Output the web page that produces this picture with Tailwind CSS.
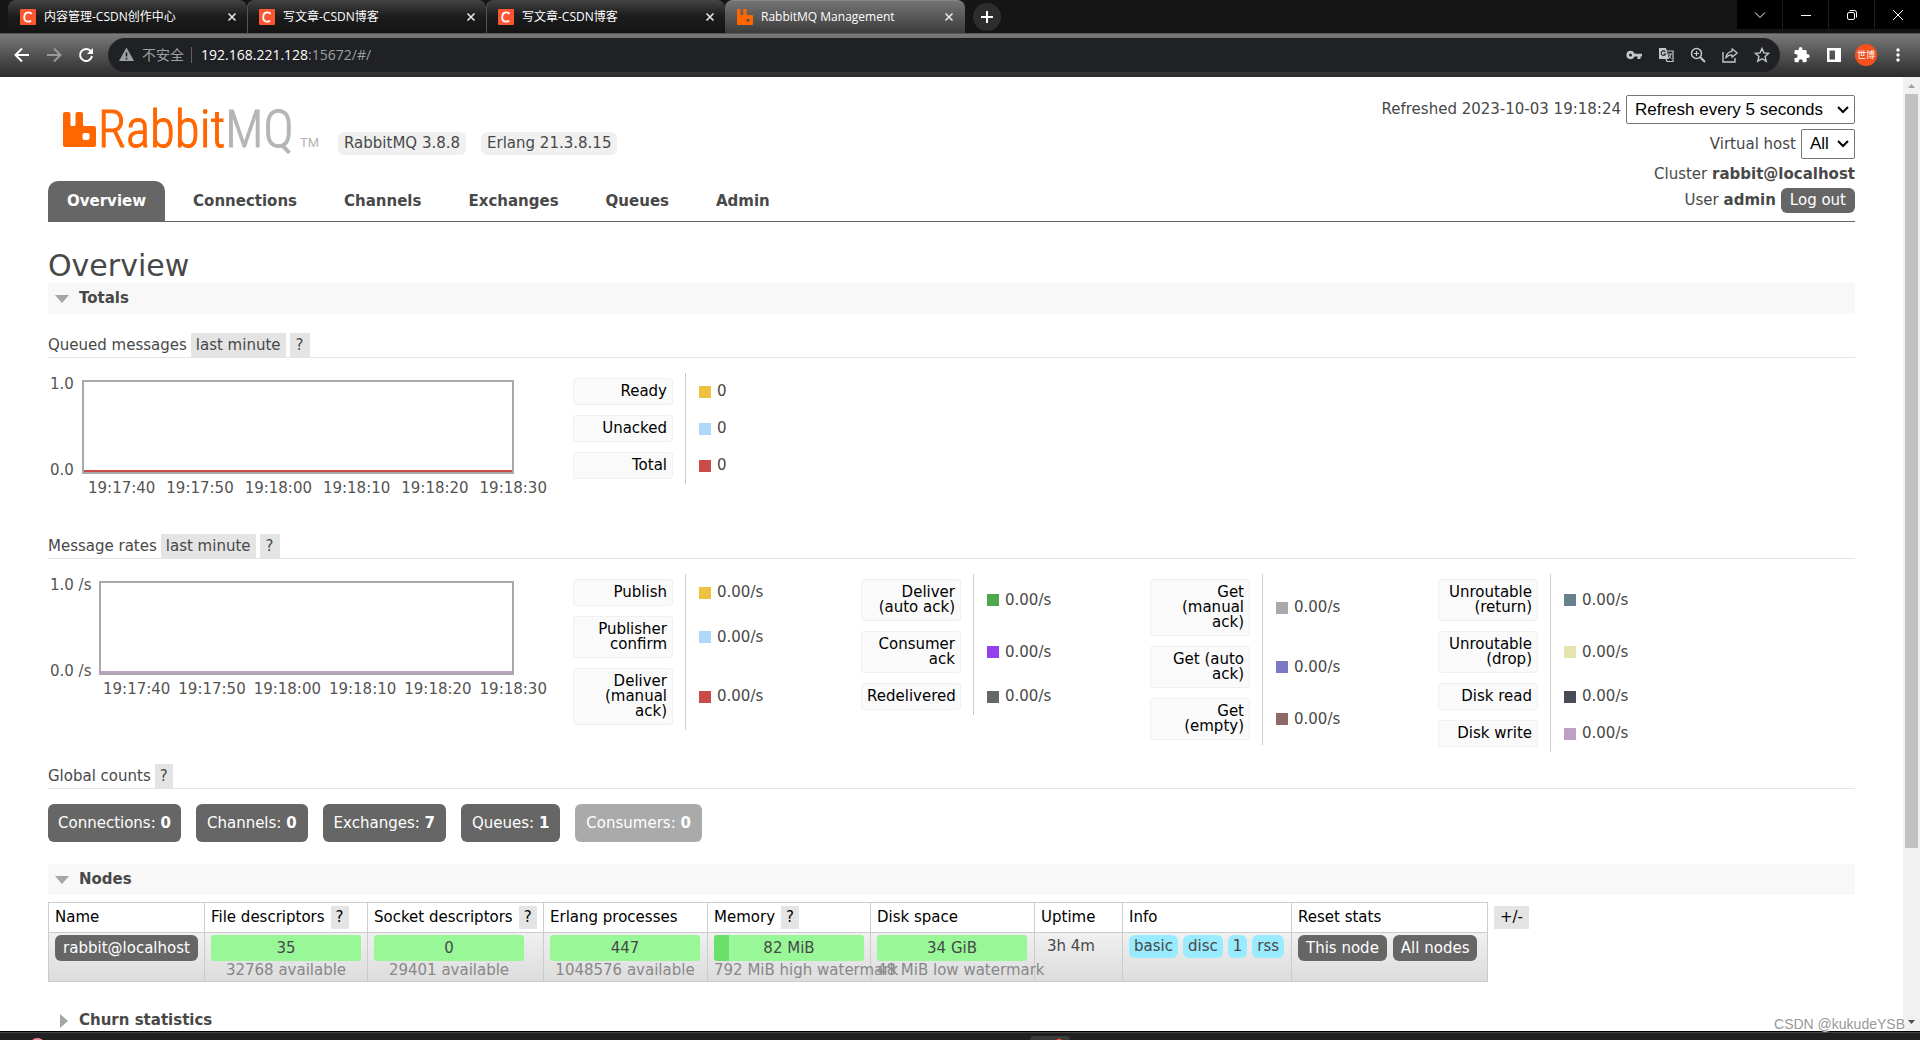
<!DOCTYPE html>
<html lang="en">
<head>
<meta charset="utf-8">
<meta name="viewport" content="width=device-width, initial-scale=1">
<title>RabbitMQ Management</title>
<script src="https://cdn.jsdelivr.net/npm/@tailwindcss/browser@4"></script>
</head>
<body class="flex h-screen flex-col overflow-hidden bg-white font-['DejaVu_Sans',sans-serif] text-[15px] text-[#484848]">

<!-- Browser tab strip -->
<div class="flex h-[33px] shrink-0 items-start bg-[#151515] pl-2 font-['Open_Sans','Noto_Sans_CJK_SC',sans-serif] text-xs text-white">
  <div class="flex h-full w-[239px] items-center rounded-t-lg bg-linear-to-b from-[#444] via-[#1c1c1c] to-[#141414] pl-3 pr-2">
    <svg class="size-4" viewBox="0 0 16 16"><rect width="16" height="16" rx="1" fill="#fc5531"/><path d="M11.500 5.200C10.800 3.800 9.300 3.300 7.800 3.500 5.500 3.800 4.300 5.800 4.200 8c-.1 2.500 1.200 4.500 3.600 4.600 1.200.1 2.500-.2 3.300-1" fill="none" stroke="#fff" stroke-width="1.800"/></svg>
    <span class="ml-2 flex-1">内容管理-CSDN创作中心</span>
    <button aria-label="Close tab"><svg class="size-[14px]" viewBox="0 0 14 14"><path d="M3.500 3.500l7 7M10.500 3.500l-7 7" stroke="#e8e8e8" stroke-width="1.600"/></svg></button>
  </div>
  <div class="flex h-full w-[239px] items-center rounded-t-lg border-l border-[#555] bg-linear-to-b from-[#444] via-[#1c1c1c] to-[#141414] pl-[11px] pr-2">
    <svg class="size-4" viewBox="0 0 16 16"><rect width="16" height="16" rx="1" fill="#fc5531"/><path d="M11.500 5.200C10.800 3.800 9.300 3.300 7.800 3.500 5.500 3.800 4.300 5.800 4.200 8c-.1 2.500 1.200 4.500 3.600 4.600 1.200.1 2.500-.2 3.300-1" fill="none" stroke="#fff" stroke-width="1.800"/></svg>
    <span class="ml-2 flex-1">写文章-CSDN博客</span>
    <button aria-label="Close tab"><svg class="size-[14px]" viewBox="0 0 14 14"><path d="M3.500 3.500l7 7M10.500 3.500l-7 7" stroke="#e8e8e8" stroke-width="1.600"/></svg></button>
  </div>
  <div class="flex h-full w-[239px] items-center rounded-t-lg border-l border-[#555] bg-linear-to-b from-[#444] via-[#1c1c1c] to-[#141414] pl-[11px] pr-2">
    <svg class="size-4" viewBox="0 0 16 16"><rect width="16" height="16" rx="1" fill="#fc5531"/><path d="M11.500 5.200C10.800 3.800 9.300 3.300 7.800 3.500 5.500 3.800 4.300 5.800 4.200 8c-.1 2.500 1.200 4.500 3.600 4.600 1.200.1 2.500-.2 3.300-1" fill="none" stroke="#fff" stroke-width="1.800"/></svg>
    <span class="ml-2 flex-1">写文章-CSDN博客</span>
    <button aria-label="Close tab"><svg class="size-[14px]" viewBox="0 0 14 14"><path d="M3.500 3.500l7 7M10.500 3.500l-7 7" stroke="#e8e8e8" stroke-width="1.600"/></svg></button>
  </div>
  <div class="flex h-full w-[240px] items-center rounded-t-lg border-t border-[#888] bg-linear-to-b from-[#747474] to-[#3c3c3c] pl-3 pr-[9px]">
    <svg class="size-4" viewBox="0 0 16 16"><path fill="#f60" fill-rule="evenodd" d="M0 .8Q0 0 .8 0h1.900q.8 0 .8.800V6h2.700V.800Q6.200 0 7 0h1.900q.8 0 .8.800V6h5.500q.8 0 .8.800v8.400q0 .8-.8.800H.8Q0 16 0 15.200zM9.600 10v2.600h3V10z"/></svg>
    <span class="ml-2 flex-1">RabbitMQ Management</span>
    <button aria-label="Close tab"><svg class="size-[14px]" viewBox="0 0 14 14"><path d="M3.500 3.500l7 7M10.500 3.500l-7 7" stroke="#e8e8e8" stroke-width="1.600"/></svg></button>
  </div>
  <button class="ml-2 mt-[3px] flex size-7 items-center justify-center rounded-full bg-[#2d2d2d]" aria-label="New tab"><svg class="size-3" viewBox="0 0 12 12"><path d="M6 0v12M0 6h12" stroke="#fff" stroke-width="2"/></svg></button>
  <div class="flex-1"></div>
  <div class="flex h-[29px] gap-px bg-[#1d1d1d]">
    <button class="flex w-[45px] items-center justify-center bg-black" aria-label="Search tabs"><svg class="size-3" viewBox="0 0 12 12"><path d="M1 3.500l5 5 5-5" fill="none" stroke="#fff"/></svg></button>
    <button class="flex w-[45px] items-center justify-center bg-black" aria-label="Minimize"><svg class="size-3" viewBox="0 0 12 12"><path d="M1 6.500h10" stroke="#fff"/></svg></button>
    <button class="flex w-[45px] items-center justify-center bg-black" aria-label="Restore"><svg class="size-3" viewBox="0 0 12 12"><rect x="1.500" y="3.500" width="7" height="7" rx="1.500" fill="none" stroke="#fff"/><path d="M3.500 1.500h5a2 2 0 0 1 2 2v5" fill="none" stroke="#fff"/></svg></button>
    <button class="flex w-[45px] items-center justify-center bg-black" aria-label="Close"><svg class="size-3" viewBox="0 0 12 12"><path d="M1 1l10 10M11 1L1 11" stroke="#fff"/></svg></button>
  </div>
</div>

<!-- Browser toolbar -->
<div class="flex h-11 shrink-0 items-center border-t border-[#555] bg-linear-to-b from-[#7a7a7a] to-[#2c2c2c] px-[14px] pb-[2px] font-['Open_Sans','Noto_Sans_CJK_SC',sans-serif]">
  <div class="flex gap-4">
    <button aria-label="Back"><svg class="size-4" viewBox="0 0 16 16"><path d="M15 8H2M8 1.500L1.500 8 8 14.500" fill="none" stroke="#fff" stroke-width="2"/></svg></button>
    <button aria-label="Forward"><svg class="size-4" viewBox="0 0 16 16"><path d="M1 8h13M8 1.500L14.500 8 8 14.500" fill="none" stroke="#9a9a9a" stroke-width="2"/></svg></button>
    <button aria-label="Reload"><svg class="size-4" viewBox="0 0 16 16"><path d="M13 4.500A6 6 0 1 0 14 9" fill="none" stroke="#fff" stroke-width="2"/><path d="M15 1v6H9z" fill="#fff"/></svg></button>
  </div>
  <div class="ml-[14px] flex h-[34px] flex-1 items-center rounded-full bg-[#202124] pl-[11px] pr-[10px] text-sm text-[#9aa0a6]">
    <svg class="size-[15px]" viewBox="0 0 15 15"><path d="M7.500.5L15 14H0z" fill="#9aa0a6"/><path d="M7.500 5.500v4M7.500 10.800v1.600" stroke="#202124" stroke-width="1.600"/></svg>
    <span class="ml-2">不安全</span>
    <span class="ml-[7px] h-4 w-px bg-[#5f6368]"></span>
    <div class="ml-[9px] flex-1"><a href="#/"><span class="text-white">192.168.221.128</span>:15672/#/</a></div>
    <div class="flex items-center gap-4">
      <svg class="size-4" viewBox="0 0 16 16"><path fill="#c4c7ca" fill-rule="evenodd" d="M4.500 3.800a4.200 4.200 0 0 1 4 2.900H16v2.900h-1.500V12h-3V9.600h-3a4.200 4.200 0 1 1-4-5.800zm0 2.800a1.500 1.500 0 1 0 0 3 1.500 1.500 0 0 0 0-3z"/></svg>
      <svg class="size-4" viewBox="0 0 16 16"><path d="M1 1h7l3 11H1.500Q1 12 1 11z" fill="#c4c7ca"/><path d="M8.500 4H15v10.500H9L8 12" fill="none" stroke="#c4c7ca" stroke-width="1.200"/><path d="M7.300 4.800A2.300 2.300 0 1 0 7.600 7H5.500" fill="none" stroke="#202124" stroke-width="1.100"/><path d="M10 7h4M12.800 7.200q-.6 2.700-2.600 4.500M11 8.500q.8 2 2.600 3.200" fill="none" stroke="#c4c7ca"/></svg>
      <svg class="size-4" viewBox="0 0 16 16"><circle cx="6.500" cy="6.500" r="5" fill="none" stroke="#c4c7ca" stroke-width="1.500"/><path d="M10.200 10.200L15 15" stroke="#c4c7ca" stroke-width="2"/><path d="M6.500 4v5M4 6.500h5" stroke="#c4c7ca" stroke-width="1.200"/></svg>
      <svg class="size-4" viewBox="0 0 16 16"><path d="M1 5v10h12v-4" fill="none" stroke="#c4c7ca" stroke-width="1.400"/><path d="M10 1.800L15.200 6 10 10.200V7.800Q6 7.800 3.800 11 4.500 5 10 4.300z" fill="none" stroke="#c4c7ca" stroke-width="1.300" stroke-linejoin="round"/></svg>
      <svg class="size-4" viewBox="0 0 16 16"><path d="M8 1.500l1.900 4.400 4.800.4-3.600 3.200 1.100 4.700L8 11.700l-4.200 2.500 1.100-4.700L1.300 6.300l4.800-.4z" fill="none" stroke="#c4c7ca" stroke-width="1.400"/></svg>
    </div>
  </div>
  <div class="ml-[14px] flex items-center gap-4">
    <svg class="size-4" viewBox="0 0 16 16"><path d="M13.800 7.300h-1.100V4.400q0-1.400-1.400-1.400H8.400V1.800a1.800 1.800 0 0 0-3.600 0V3H1.900Q.5 3 .5 4.400v2.700h1.100a2 2 0 0 1 0 4H.5v2.800q0 1.400 1.400 1.400h2.800v-1.100a2 2 0 0 1 4 0v1.100h2.600q1.400 0 1.400-1.400V11h1.100a1.850 1.850 0 0 0 0-3.700z" fill="#fff"/></svg>
    <svg class="size-4" viewBox="0 0 16 16"><path d="M1 1h14v14H1zM3.500 3.500v9H9v-9z" fill="#fff" fill-rule="evenodd"/></svg>
    <span class="-mx-[3px] flex size-[22px] items-center justify-center rounded-full bg-[#f4511e] text-[9px] leading-none text-white">世博</span>
    <svg class="size-4" viewBox="0 0 16 16"><circle cx="8" cy="3" r="1.700" fill="#fff"/><circle cx="8" cy="8" r="1.700" fill="#fff"/><circle cx="8" cy="13" r="1.700" fill="#fff"/></svg>
  </div>
</div>

<!-- Page viewport -->
<div class="flex min-h-0 flex-1">
<main class="h-full min-w-0 flex-1 overflow-hidden px-12">

  <header class="flex h-[145px] items-stretch justify-between border-b border-[#666]">
    <div class="flex flex-col justify-between">
      <div class="flex items-end pl-[15px] pt-[34px]">
        <svg class="h-[38px] w-[256px] overflow-visible" viewBox="0 0 256 38" role="img" aria-label="RabbitMQ">
          <path fill="#f60" fill-rule="evenodd" d="M0 3Q0 1 2 1h3.500q2 0 2 2v10.500q0 1.500 1.500 1.500h2q1.500 0 1.500-1.500V3q0-2 2-2H18q2 0 2 2v10.500q0 1.500 1.500 1.500H31q2 0 2 2v17q0 2-2 2H2q-2 0-2-2zM21.500 22q-2 0-2 2v3q0 2 2 2h3q2 0 2-2v-3q0-2-2-2z"/>
          <text x="35" y="36" font-size="51" stroke-width="1" class="font-['Roboto_Condensed'] font-light"><tspan fill="#f60" stroke="#f60">Rabbit</tspan><tspan fill="#b5b5b5" stroke="#b5b5b5">MQ</tspan></text>
          <text x="237" y="36" font-size="13" fill="#b5b5b5" class="font-['Roboto']">TM</text>
        </svg>
        <div class="-mb-[6px] ml-[19px] flex gap-[15px]">
          <span class="rounded-md bg-[#f0f0f0] px-[6px] leading-[23px]">RabbitMQ 3.8.8</span>
          <span class="rounded-md bg-[#f0f0f0] px-[6px] leading-[23px]">Erlang 21.3.8.15</span>
        </div>
      </div>
      <nav class="flex gap-[9px] font-bold leading-10">
        <a href="#/" class="rounded-t-[10px] bg-[#666] px-[19px] text-white">Overview</a>
        <a href="#/connections" class="px-[19px]">Connections</a>
        <a href="#/channels" class="px-[19px]">Channels</a>
        <a href="#/exchanges" class="px-[19px]">Exchanges</a>
        <a href="#/queues" class="px-[19px]">Queues</a>
        <a href="#/users" class="px-[19px]">Admin</a>
      </nav>
    </div>
    <div class="flex flex-col items-end pt-[18px]">
      <div class="flex items-center gap-[5px]">
        <label for="refresh">Refreshed 2023-10-03 19:18:24</label>
        <div class="relative">
          <select id="refresh" class="block h-[29px] w-[229px] appearance-none rounded-xs border border-[#767676] bg-white pl-2 font-['Liberation_Sans',sans-serif] text-[17px] text-black"><option>Refresh every 5 seconds</option><option>Refresh every 10 seconds</option></select>
          <svg class="pointer-events-none absolute right-[6px] top-[11px] h-2 w-3" viewBox="0 0 12 8"><path d="M1 1l5 5 5-5" fill="none" stroke="#000" stroke-width="2"/></svg>
        </div>
      </div>
      <div class="mt-[5px] flex items-center gap-[5px]">
        <label for="vhost">Virtual host</label>
        <div class="relative">
          <select id="vhost" class="block h-[30px] w-[54px] appearance-none rounded-xs border border-[#767676] bg-white pl-2 font-['Liberation_Sans',sans-serif] text-[17px] text-black"><option>All</option><option>/</option></select>
          <svg class="pointer-events-none absolute right-[6px] top-[11px] h-2 w-3" viewBox="0 0 12 8"><path d="M1 1l5 5 5-5" fill="none" stroke="#000" stroke-width="2"/></svg>
        </div>
      </div>
      <div class="mt-1 leading-[23px]">Cluster <b>rabbit@localhost</b></div>
      <div class="mt-[2px] flex items-center gap-[5px] leading-[25px]">
        <span>User <b>admin</b></span>
        <button class="rounded-md bg-[#666] px-[9px] text-white">Log out</button>
      </div>
    </div>
  </header>

  <h1 class="pt-[27px] text-[30px] leading-[34px]">Overview</h1>
  <h2 class="flex h-[31px] items-center bg-[#f8f8f8] pl-[7px] font-bold">
    <svg class="mr-[10px] h-2 w-[14px]" viewBox="0 0 14 8"><path d="M0 0h14L7 8z" fill="#a5a5a5"/></svg>Totals
  </h2>

  <h3 class="mt-[19px] flex gap-1 border-b border-[#e4e4e4] leading-6">Queued messages
    <button class="bg-[#e4e4e4] px-[5px]">last minute</button><button class="bg-[#e4e4e4] px-[6px]">?</button>
  </h3>
  <section class="mt-[15px] flex h-[142px]">
    <div class="w-[525px] shrink-0 pt-[7px] text-[#545454]">
      <div class="flex h-[94px]">
        <div class="-my-[6px] flex w-[34px] shrink-0 flex-col justify-between pl-[2px] leading-5"><span>1.0</span><span>0.0</span></div>
        <div class="flex w-[432px] items-end border-2 border-[#a9a9a9]"><div class="h-[2px] w-full bg-[#cb4b4b]"></div></div>
      </div>
      <div class="ml-10 mr-[26px] mt-1 flex justify-between leading-5"><span>19:17:40</span><span>19:17:50</span><span>19:18:00</span><span>19:18:10</span><span>19:18:20</span><span>19:18:30</span></div>
    </div>
    <table class="self-start leading-[15px]">
      <tr><th class="border-r border-[#ccc] py-[5px] pl-0 pr-3 font-normal"><div class="w-[100px] rounded-[3px] border border-[#f0f0f0] bg-[#fafafa] p-[5px] text-right text-black">Ready</div></th><td class="pl-[13px]"><div class="flex items-center gap-[6px]"><i class="size-3 bg-[#edc240]"></i>0</div></td></tr>
      <tr><th class="border-r border-[#ccc] py-[5px] pl-0 pr-3 font-normal"><div class="w-[100px] rounded-[3px] border border-[#f0f0f0] bg-[#fafafa] p-[5px] text-right text-black">Unacked</div></th><td class="pl-[13px]"><div class="flex items-center gap-[6px]"><i class="size-3 bg-[#afd8f8]"></i>0</div></td></tr>
      <tr><th class="border-r border-[#ccc] py-[5px] pl-0 pr-3 font-normal"><div class="w-[100px] rounded-[3px] border border-[#f0f0f0] bg-[#fafafa] p-[5px] text-right text-black">Total</div></th><td class="pl-[13px]"><div class="flex items-center gap-[6px]"><i class="size-3 bg-[#cb4b4b]"></i>0</div></td></tr>
    </table>
  </section>

  <h3 class="mt-[19px] flex gap-1 border-b border-[#e4e4e4] leading-6">Message rates
    <button class="bg-[#e4e4e4] px-[5px]">last minute</button><button class="bg-[#e4e4e4] px-[6px]">?</button>
  </h3>
  <section class="mt-[15px] flex">
    <div class="w-[525px] shrink-0 pt-[7px] text-[#545454]">
      <div class="flex h-[94px]">
        <div class="-my-[6px] flex w-[51px] shrink-0 flex-col justify-between pl-[2px] leading-5"><span>1.0 /s</span><span>0.0 /s</span></div>
        <div class="flex w-[415px] items-end border-2 border-[#a9a9a9]"><div class="h-[2px] w-full bg-[#bda0c3]"></div></div>
      </div>
      <div class="ml-[55px] mr-[26px] mt-1 flex justify-between leading-5"><span>19:17:40</span><span>19:17:50</span><span>19:18:00</span><span>19:18:10</span><span>19:18:20</span><span>19:18:30</span></div>
    </div>
    <div class="flex w-[288px] shrink-0 items-start">
      <table class="leading-[15px]">
        <tr><th class="border-r border-[#ccc] py-[5px] pl-0 pr-3 font-normal"><div class="w-[100px] rounded-[3px] border border-[#f0f0f0] bg-[#fafafa] p-[5px] text-right text-black">Publish</div></th><td class="pl-[13px]"><div class="flex items-center gap-[6px]"><i class="size-3 bg-[#edc240]"></i>0.00/s</div></td></tr>
        <tr><th class="border-r border-[#ccc] py-[5px] pl-0 pr-3 font-normal"><div class="w-[100px] rounded-[3px] border border-[#f0f0f0] bg-[#fafafa] p-[5px] text-right text-black">Publisher<br>confirm</div></th><td class="pl-[13px]"><div class="flex items-center gap-[6px]"><i class="size-3 bg-[#afd8f8]"></i>0.00/s</div></td></tr>
        <tr><th class="border-r border-[#ccc] py-[5px] pl-0 pr-3 font-normal"><div class="w-[100px] rounded-[3px] border border-[#f0f0f0] bg-[#fafafa] p-[5px] text-right text-black">Deliver<br>(manual<br>ack)</div></th><td class="pl-[13px]"><div class="flex items-center gap-[6px]"><i class="size-3 bg-[#cb4b4b]"></i>0.00/s</div></td></tr>
      </table>
    </div>
    <div class="flex w-[289px] shrink-0 items-start">
      <table class="leading-[15px]">
        <tr><th class="border-r border-[#ccc] py-[5px] pl-0 pr-3 font-normal"><div class="w-[100px] rounded-[3px] border border-[#f0f0f0] bg-[#fafafa] p-[5px] text-right text-black">Deliver<br>(auto ack)</div></th><td class="pl-[13px]"><div class="flex items-center gap-[6px]"><i class="size-3 bg-[#4da74d]"></i>0.00/s</div></td></tr>
        <tr><th class="border-r border-[#ccc] py-[5px] pl-0 pr-3 font-normal"><div class="w-[100px] rounded-[3px] border border-[#f0f0f0] bg-[#fafafa] p-[5px] text-right text-black">Consumer<br>ack</div></th><td class="pl-[13px]"><div class="flex items-center gap-[6px]"><i class="size-3 bg-[#9440ed]"></i>0.00/s</div></td></tr>
        <tr><th class="border-r border-[#ccc] py-[5px] pl-0 pr-3 font-normal"><div class="w-[100px] rounded-[3px] border border-[#f0f0f0] bg-[#fafafa] p-[5px] text-right text-black">Redelivered</div></th><td class="pl-[13px]"><div class="flex items-center gap-[6px]"><i class="size-3 bg-[#666]"></i>0.00/s</div></td></tr>
      </table>
    </div>
    <div class="flex w-[288px] shrink-0 items-start">
      <table class="leading-[15px]">
        <tr><th class="border-r border-[#ccc] py-[5px] pl-0 pr-3 font-normal"><div class="w-[100px] rounded-[3px] border border-[#f0f0f0] bg-[#fafafa] p-[5px] text-right text-black">Get<br>(manual<br>ack)</div></th><td class="pl-[13px]"><div class="flex items-center gap-[6px]"><i class="size-3 bg-[#aaa]"></i>0.00/s</div></td></tr>
        <tr><th class="border-r border-[#ccc] py-[5px] pl-0 pr-3 font-normal"><div class="w-[100px] rounded-[3px] border border-[#f0f0f0] bg-[#fafafa] p-[5px] text-right text-black">Get (auto<br>ack)</div></th><td class="pl-[13px]"><div class="flex items-center gap-[6px]"><i class="size-3 bg-[#7c79c3]"></i>0.00/s</div></td></tr>
        <tr><th class="border-r border-[#ccc] py-[5px] pl-0 pr-3 font-normal"><div class="w-[100px] rounded-[3px] border border-[#f0f0f0] bg-[#fafafa] p-[5px] text-right text-black">Get<br>(empty)</div></th><td class="pl-[13px]"><div class="flex items-center gap-[6px]"><i class="size-3 bg-[#8e6767]"></i>0.00/s</div></td></tr>
      </table>
    </div>
    <div class="flex items-start">
      <table class="leading-[15px]">
        <tr><th class="border-r border-[#ccc] py-[5px] pl-0 pr-3 font-normal"><div class="w-[100px] rounded-[3px] border border-[#f0f0f0] bg-[#fafafa] p-[5px] text-right text-black">Unroutable<br>(return)</div></th><td class="pl-[13px]"><div class="flex items-center gap-[6px]"><i class="size-3 bg-[#67808d]"></i>0.00/s</div></td></tr>
        <tr><th class="border-r border-[#ccc] py-[5px] pl-0 pr-3 font-normal"><div class="w-[100px] rounded-[3px] border border-[#f0f0f0] bg-[#fafafa] p-[5px] text-right text-black">Unroutable<br>(drop)</div></th><td class="pl-[13px]"><div class="flex items-center gap-[6px]"><i class="size-3 bg-[#e5e4ae]"></i>0.00/s</div></td></tr>
        <tr><th class="border-r border-[#ccc] py-[5px] pl-0 pr-3 font-normal"><div class="w-[100px] rounded-[3px] border border-[#f0f0f0] bg-[#fafafa] p-[5px] text-right text-black">Disk read</div></th><td class="pl-[13px]"><div class="flex items-center gap-[6px]"><i class="size-3 bg-[#4a4a55]"></i>0.00/s</div></td></tr>
        <tr><th class="border-r border-[#ccc] py-[5px] pl-0 pr-3 font-normal"><div class="w-[100px] rounded-[3px] border border-[#f0f0f0] bg-[#fafafa] p-[5px] text-right text-black">Disk write</div></th><td class="pl-[13px]"><div class="flex items-center gap-[6px]"><i class="size-3 bg-[#bda0c3]"></i>0.00/s</div></td></tr>
      </table>
    </div>
  </section>

  <h3 class="mt-3 flex gap-1 border-b border-[#e4e4e4] leading-6">Global counts
    <button class="bg-[#e4e4e4] px-[5px]">?</button>
  </h3>
  <div class="mt-[15px] flex gap-[15px] leading-[38px] text-white">
    <a href="#/connections" class="rounded-md bg-[#666] px-[10px]">Connections: <b>0</b></a>
    <a href="#/channels" class="rounded-md bg-[#666] px-[11px]">Channels: <b>0</b></a>
    <a href="#/exchanges" class="rounded-md bg-[#666] px-[11px]">Exchanges: <b>7</b></a>
    <a href="#/queues" class="rounded-md bg-[#666] px-[11px]">Queues: <b>1</b></a>
    <span class="rounded-md bg-[#aaa] px-[11px]">Consumers: <b>0</b></span>
  </div>

  <h2 class="mt-[22px] flex h-[31px] items-center bg-[#f8f8f8] pl-[7px] font-bold">
    <svg class="mr-[10px] h-2 w-[14px]" viewBox="0 0 14 8"><path d="M0 0h14L7 8z" fill="#a5a5a5"/></svg>Nodes
  </h2>
  <div class="mt-[7px] flex gap-[6px]">
    <table class="w-[1440px] table-fixed border-collapse leading-[23px]">
      <colgroup><col class="w-[156px]"><col class="w-[163px]"><col class="w-[176px]"><col class="w-[164px]"><col class="w-[163px]"><col class="w-[164px]"><col class="w-[88px]"><col class="w-[169px]"><col></colgroup>
      <tr class="h-[30px] text-left text-black">
        <th class="border border-[#ccc] px-[6px] font-normal">Name</th>
        <th class="border border-[#ccc] px-[6px] font-normal"><div class="flex gap-[6px]">File descriptors <button class="bg-[#e4e4e4] px-[5px]">?</button></div></th>
        <th class="border border-[#ccc] px-[6px] font-normal"><div class="flex gap-[6px] whitespace-nowrap">Socket descriptors <button class="bg-[#e4e4e4] px-[5px]">?</button></div></th>
        <th class="border border-[#ccc] px-[6px] font-normal">Erlang processes</th>
        <th class="border border-[#ccc] px-[6px] font-normal"><div class="flex gap-[6px]">Memory <button class="bg-[#e4e4e4] px-[5px]">?</button></div></th>
        <th class="border border-[#ccc] px-[6px] font-normal">Disk space</th>
        <th class="border border-[#ccc] px-[6px] font-normal">Uptime</th>
        <th class="border border-[#ccc] px-[6px] font-normal">Info</th>
        <th class="border border-[#ccc] px-[6px] font-normal">Reset stats</th>
      </tr>
      <tr class="h-[49px] bg-linear-to-b from-[#f0f0f0] to-[#dcdcdc] align-top">
        <td class="border border-[#ccc] px-[6px] pt-[2px]"><a href="#/nodes/rabbit" class="block rounded-md bg-[#666] text-center leading-[26px] text-white">rabbit@localhost</a></td>
        <td class="border border-[#ccc] px-[6px] pt-[2px]"><div class="w-[150px] rounded-[3px] bg-[#98f898] text-center leading-[26px]">35</div><div class="w-[150px] text-center leading-[18px] text-[#888]">32768 available</div></td>
        <td class="border border-[#ccc] px-[6px] pt-[2px]"><div class="w-[150px] rounded-[3px] bg-[#98f898] text-center leading-[26px]">0</div><div class="w-[150px] text-center leading-[18px] text-[#888]">29401 available</div></td>
        <td class="border border-[#ccc] px-[6px] pt-[2px]"><div class="w-[150px] rounded-[3px] bg-[#98f898] text-center leading-[26px]">447</div><div class="w-[150px] text-center leading-[18px] text-[#888]">1048576 available</div></td>
        <td class="border border-[#ccc] px-[6px] pt-[2px]"><div class="w-[150px] rounded-[3px] bg-linear-to-r from-[#6ae26a] from-10% to-[#98f898] to-10% text-center leading-[26px]">82 MiB</div><div class="w-[150px] whitespace-nowrap leading-[18px] text-[#888]">792 MiB high watermark</div></td>
        <td class="border border-[#ccc] px-[6px] pt-[2px]"><div class="w-[150px] rounded-[3px] bg-[#98f898] text-center leading-[26px]">34 GiB</div><div class="w-[150px] whitespace-nowrap leading-[18px] text-[#888]">48 MiB low watermark</div></td>
        <td class="border border-[#ccc] px-3 pt-[2px]">3h 4m</td>
        <td class="border border-[#ccc] px-[6px] pt-[2px]"><div class="flex gap-[5px]"><span class="rounded-md bg-[#99ebff] px-[5px]">basic</span><span class="rounded-md bg-[#99ebff] px-[5px]">disc</span><span class="rounded-md bg-[#99ebff] px-[5px]">1</span><span class="rounded-md bg-[#99ebff] px-[5px]">rss</span></div></td>
        <td class="border border-[#ccc] px-[6px] pt-[2px]"><div class="flex gap-[6px] leading-[26px] text-white"><button class="rounded-md bg-[#666] px-2">This node</button><button class="rounded-md bg-[#666] px-2">All nodes</button></div></td>
      </tr>
    </table>
    <button class="mt-1 self-start bg-[#e4e4e4] px-[6px] leading-[23px] text-black">+/-</button>
  </div>

  <h2 class="mt-[23px] flex h-[31px] items-center pl-3 font-bold">
    <svg class="mr-[11px] h-[14px] w-2" viewBox="0 0 8 14"><path d="M0 0v14l8-7z" fill="#a5a5a5"/></svg>Churn statistics
  </h2>
</main>

<!-- Scrollbar -->
<div class="flex w-[17px] shrink-0 flex-col items-center bg-[#f1f1f1]">
  <svg class="h-[17px] w-[17px] shrink-0" viewBox="0 0 17 17"><path d="M5 11h7L8.500 7z" fill="#a3a3a3"/></svg>
  <div class="h-[79%] w-[13px] bg-[#c1c1c1]"></div>
  <div class="flex-1"></div>
  <svg class="h-[17px] w-[17px] shrink-0" viewBox="0 0 17 17"><path d="M5 6h7l-3.500 4z" fill="#505050"/></svg>
</div>
</div>

<!-- Top edge of the system taskbar -->
<div class="flex h-[9px] shrink-0 items-end overflow-hidden border-t border-black bg-[#202022] shadow-[inset_0_1px_0_#444]">
  <svg class="ml-[30px] h-[3px] w-4" viewBox="0 0 16 3"><path d="M2 3q5-4 11 0z" fill="#f48a9a"/></svg>
  <svg class="ml-[984px] h-1 w-10" viewBox="0 0 40 4"><path d="M0 4q0-4 4-4h32q4 0 4 4z" fill="#3a3a3c"/><path d="M26 4q3-3 6 0z" fill="#f4511e"/></svg>
</div>

<div class="absolute bottom-[6px] right-[15px] font-['Liberation_Sans',sans-serif] text-sm leading-5 text-[#999] [text-shadow:1px_1px_1px_#fff]">CSDN @kukudeYSB</div>
</body>
</html>
